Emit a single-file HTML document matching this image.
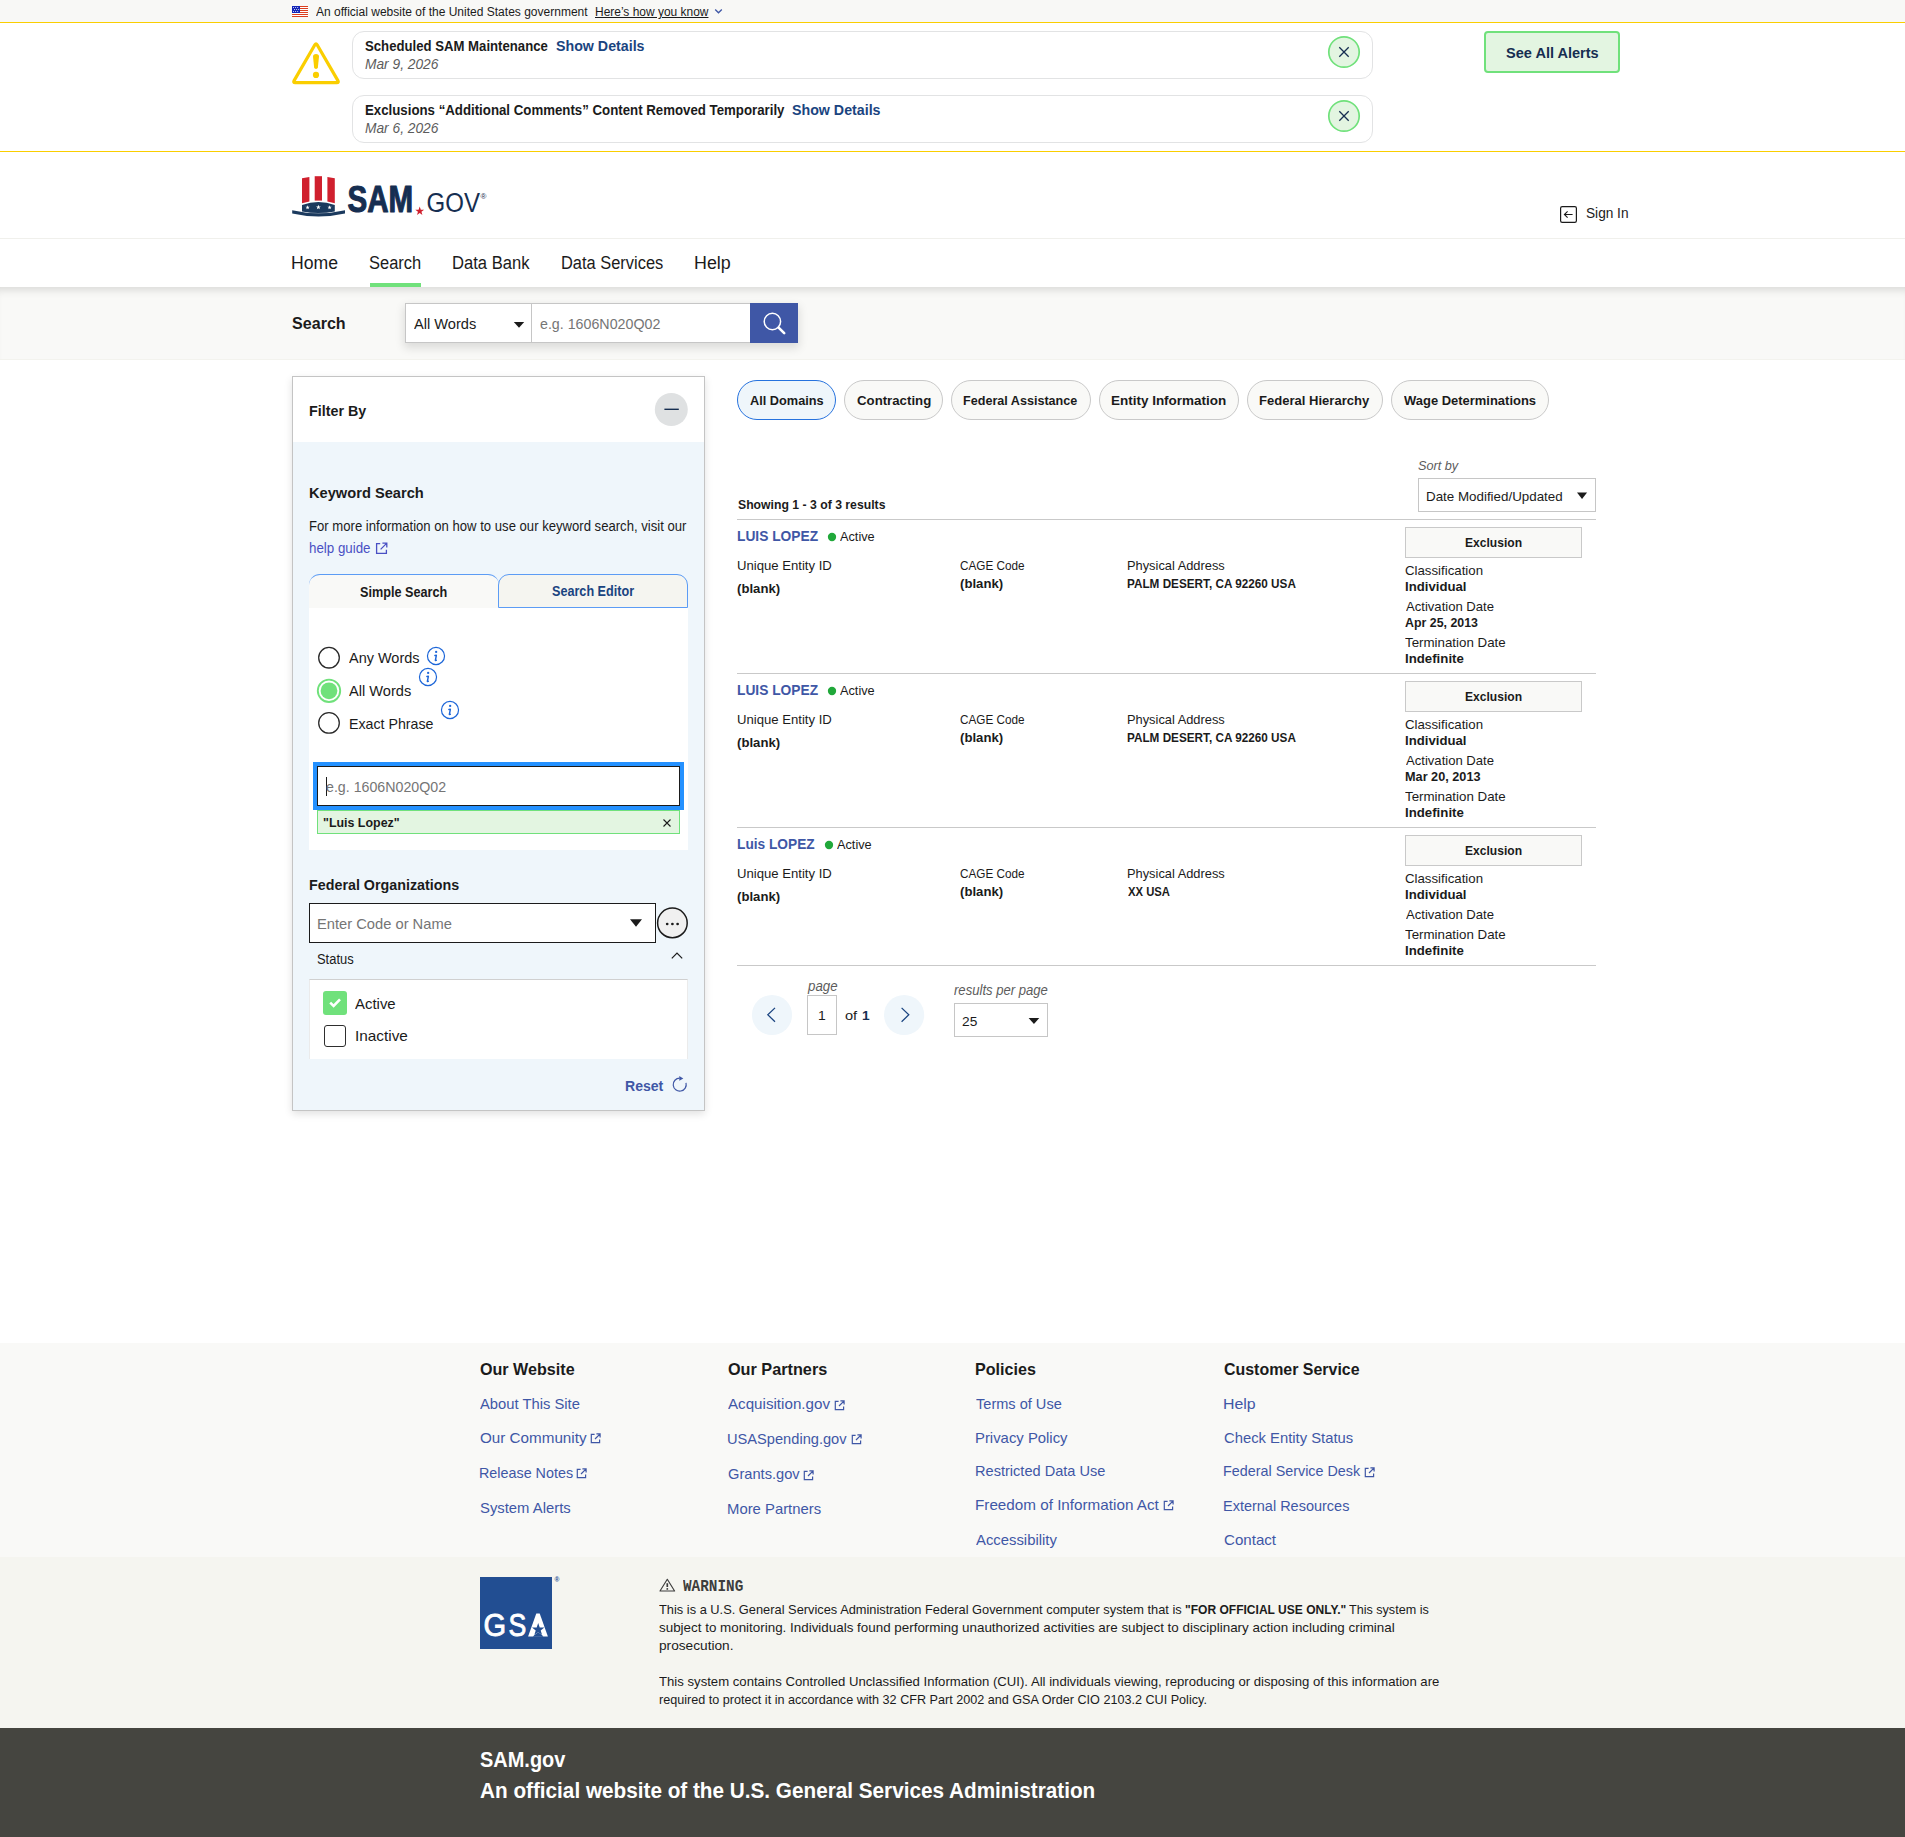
<!DOCTYPE html>
<html lang="en"><head><meta charset="utf-8"><title>SAM.gov | Search</title>
<style>
html,body{margin:0;padding:0;}
body{width:1905px;height:1837px;position:relative;overflow:hidden;background:#fff;font-family:"Liberation Sans",sans-serif;color:#1b1b1b;}
body>div,body>svg,body>span{position:absolute;box-sizing:border-box;}
.t{white-space:nowrap;}
svg{display:block;overflow:visible;}
</style></head>
<body>
<div style="left:0px;top:0px;width:1905px;height:22px;background:#f8f8f6;"></div>
<div style="left:0px;top:22px;width:1905px;height:1px;background:#face00;"></div>
<svg style="left:292px;top:6px" width="16" height="11" viewBox="0 0 16 11"><rect width="16" height="11" fill="#fff"/><g fill="#db3e1f"><rect y="0" width="16" height="1"/><rect y="2" width="16" height="1"/><rect y="4" width="16" height="1"/><rect y="6" width="16" height="1"/><rect y="8" width="16" height="1"/><rect y="10" width="16" height="1"/></g><rect width="8" height="7" fill="#1426b8"/><g fill="#fff"><circle cx="1.5" cy="1.6" r="0.5"/><circle cx="3.6" cy="1.6" r="0.5"/><circle cx="5.7" cy="1.6" r="0.5"/><circle cx="2.5" cy="3.5" r="0.5"/><circle cx="4.6" cy="3.5" r="0.5"/><circle cx="6.7" cy="3.5" r="0.5"/><circle cx="1.5" cy="5.5" r="0.5"/><circle cx="3.6" cy="5.5" r="0.5"/><circle cx="5.7" cy="5.5" r="0.5"/></g></svg>
<span class="t" style="top:5.00px;font-size:12.0px;line-height:14px;left:315.98px;transform:scaleX(1.0013);transform-origin:0 0;">An official website of the United States government</span>
<span class="t" style="top:5.00px;font-size:12.0px;line-height:14px;left:594.52px;text-decoration:underline;transform:scaleX(0.9966);transform-origin:0 0;">Here’s how you know</span>
<svg style="left:714px;top:8px" width="9" height="7" viewBox="0 0 9 7"><path d="M1.2 1.5 L4.5 4.8 L7.8 1.5" fill="none" stroke="#3f57a6" stroke-width="1.3"/></svg>
<div style="left:0px;top:151px;width:1905px;height:1px;background:#face00;"></div>
<svg style="left:285px;top:30px" width="80" height="65" viewBox="285 30 80 65"><path d="M314.9 44.7 Q316 42.8 317.1 44.7 L337.9 80.6 Q339 82.65 336.8 82.65 L295.2 82.65 Q293 82.65 294.1 80.6 Z" fill="none" stroke="#face00" stroke-width="3.2" stroke-linejoin="round"/><path d="M313 56.6 Q313 53.9 316 53.9 Q319 53.9 319 56.6 L317.9 67.3 Q317.7 69.1 316 69.1 Q314.3 69.1 314.1 67.3 Z" fill="#face00"/><circle cx="316" cy="74.9" r="3.1" fill="#face00"/></svg>
<div style="left:352px;top:31px;width:1021px;height:48px;border:1px solid #e2e3e4;border-radius:12px;background:#fff;"></div>
<span class="t" style="top:37.00px;font-size:15.0px;line-height:17px;left:365.12px;font-weight:700;transform:scaleX(0.8774);transform-origin:0 0;">Scheduled SAM Maintenance</span>
<span class="t" style="top:37.00px;font-size:15.0px;line-height:17px;left:556.09px;font-weight:700;color:#1a4480;transform:scaleX(0.9479);transform-origin:0 0;">Show Details</span>
<span class="t" style="top:55.00px;font-size:15.0px;line-height:17px;left:365.08px;font-style:italic;color:#5c5c5c;transform:scaleX(0.9173);transform-origin:0 0;">Mar 9, 2026</span>
<svg style="left:1327px;top:35px" width="34" height="34" viewBox="0 0 34 34"><circle cx="17" cy="17" r="15.2" fill="#e3f5e1" stroke="#70e17b" stroke-width="1.7"/><path d="M12.3 12.3 L21.7 21.7 M21.7 12.3 L12.3 21.7" stroke="#162e51" stroke-width="1.3" fill="none"/></svg>
<div style="left:352px;top:95px;width:1021px;height:48px;border:1px solid #e2e3e4;border-radius:12px;background:#fff;"></div>
<span class="t" style="top:101.00px;font-size:15.0px;line-height:17px;left:364.61px;font-weight:700;transform:scaleX(0.8834);transform-origin:0 0;">Exclusions “Additional Comments” Content Removed Temporarily</span>
<span class="t" style="top:101.00px;font-size:15.0px;line-height:17px;left:792.09px;font-weight:700;color:#1a4480;transform:scaleX(0.9479);transform-origin:0 0;">Show Details</span>
<span class="t" style="top:119.00px;font-size:15.0px;line-height:17px;left:365.08px;font-style:italic;color:#5c5c5c;transform:scaleX(0.9173);transform-origin:0 0;">Mar 6, 2026</span>
<svg style="left:1327px;top:99px" width="34" height="34" viewBox="0 0 34 34"><circle cx="17" cy="17" r="15.2" fill="#e3f5e1" stroke="#70e17b" stroke-width="1.7"/><path d="M12.3 12.3 L21.7 21.7 M21.7 12.3 L12.3 21.7" stroke="#162e51" stroke-width="1.3" fill="none"/></svg>
<div style="left:1484px;top:31px;width:136px;height:42px;border:2px solid #70e17b;border-radius:4px;background:#e3f5e1;"></div>
<span class="t" style="top:44.00px;font-size:15.0px;line-height:17px;left:1506.08px;font-weight:700;color:#162e51;transform:scaleX(0.9697);transform-origin:0 0;">See All Alerts</span>
<svg style="left:288px;top:172px" width="204" height="48" viewBox="288 172 204 48">
<g fill="#d0202e"><path d="M302 178.2 L309.4 176.9 L309.4 201.6 L302 203.2 Z"/><path d="M314.7 176.2 L322 176.2 L322 200.6 L314.7 200.6 Z"/><path d="M327.4 176.9 L334.8 178.2 L334.8 203.2 L327.4 201.6 Z"/></g>
<path d="M302 205 Q318.4 199.2 334.8 205 L334.8 211.6 Q318.4 214.6 302 211.6 Z" fill="#1b3a5e"/>
<path d="M292.2 210.2 Q318.5 216.4 345 210.2 L345 213.5 Q318.5 219.5 292.2 213.5 Z" fill="#1b3a5e"/>
<g fill="#fff"><path id="st" d="M0 -2.2 L0.55 -0.7 L2.1 -0.7 L0.85 0.3 L1.3 1.8 L0 0.9 L-1.3 1.8 L-0.85 0.3 L-2.1 -0.7 L-0.55 -0.7 Z" transform="translate(307.6 207.5)"/><path d="M0 -2.2 L0.55 -0.7 L2.1 -0.7 L0.85 0.3 L1.3 1.8 L0 0.9 L-1.3 1.8 L-0.85 0.3 L-2.1 -0.7 L-0.55 -0.7 Z" transform="translate(318.4 207.2) scale(1.15)"/><path d="M0 -2.2 L0.55 -0.7 L2.1 -0.7 L0.85 0.3 L1.3 1.8 L0 0.9 L-1.3 1.8 L-0.85 0.3 L-2.1 -0.7 L-0.55 -0.7 Z" transform="translate(329.6 207.5)"/></g>
<text x="347.6" y="212" font-family="Liberation Sans, sans-serif" font-weight="700" font-size="36.4" textLength="65.6" lengthAdjust="spacingAndGlyphs" fill="#162e51" stroke="#162e51" stroke-width="1.1" stroke-linejoin="round">SAM</text>
<path d="M0 -4.6 L1.1 -1.45 L4.4 -1.45 L1.75 0.55 L2.7 3.7 L0 1.8 L-2.7 3.7 L-1.75 0.55 L-4.4 -1.45 L-1.1 -1.45 Z" transform="translate(419.7 211.2)" fill="#d0202e"/>
<text x="426.6" y="212.4" font-family="Liberation Sans, sans-serif" font-size="28.4" textLength="53.4" lengthAdjust="spacingAndGlyphs" fill="#162e51">GOV</text>
<text x="480.6" y="199.2" font-family="Liberation Sans, sans-serif" font-size="8" fill="#162e51">®</text>
</svg>
<svg style="left:1559px;top:205px" width="19" height="19" viewBox="0 0 19 19"><rect x="1.6" y="1.6" width="15.8" height="15.8" rx="1.6" fill="none" stroke="#1b1b1b" stroke-width="1.2"/><path d="M13.6 9.5 L5.6 9.5 M8.6 6.4 L5.4 9.5 L8.6 12.6" fill="none" stroke="#1b1b1b" stroke-width="1.1"/></svg>
<span class="t" style="top:204.00px;font-size:15.0px;line-height:17px;left:1585.68px;transform:scaleX(0.9101);transform-origin:0 0;">Sign In</span>
<div style="left:0px;top:238px;width:1905px;height:1px;background:#f0f0ec;"></div>
<span class="t" style="top:253.00px;font-size:17.81px;line-height:20px;left:291.15px;transform:scaleX(0.9904);transform-origin:0 0;">Home</span>
<span class="t" style="top:253.00px;font-size:17.81px;line-height:20px;left:369.45px;transform:scaleX(0.9260);transform-origin:0 0;">Search</span>
<span class="t" style="top:253.00px;font-size:17.81px;line-height:20px;left:452.44px;transform:scaleX(0.9330);transform-origin:0 0;">Data Bank</span>
<span class="t" style="top:253.00px;font-size:17.81px;line-height:20px;left:561.35px;transform:scaleX(0.9229);transform-origin:0 0;">Data Services</span>
<span class="t" style="top:253.00px;font-size:17.81px;line-height:20px;left:694.23px;transform:scaleX(1.0029);transform-origin:0 0;">Help</span>
<div style="left:370px;top:283px;width:51px;height:4px;background:#70e17b;"></div>
<div style="left:0px;top:287px;width:1905px;height:73px;background:#f9f9f7;box-shadow:inset 0 9px 8px -6px rgba(0,0,0,0.13);"></div>
<div style="left:0px;top:359px;width:1905px;height:1px;background:#f3f3ee;"></div>
<span class="t" style="top:314.00px;font-size:16.88px;line-height:19px;left:292.14px;font-weight:700;transform:scaleX(0.9543);transform-origin:0 0;">Search</span>
<div style="left:405px;top:303px;width:393px;height:40px;box-shadow:0 4px 9px 1px rgba(0,0,0,0.12);background:#fff;"></div>
<div style="left:405px;top:303px;width:127px;height:40px;border:1px solid #c6c6c6;background:#fff;"></div>
<div style="left:531px;top:303px;width:220px;height:40px;border:1px solid #c6c6c6;background:#fff;"></div>
<span class="t" style="top:315.00px;font-size:15.0px;line-height:17px;left:414.27px;transform:scaleX(0.9742);transform-origin:0 0;">All Words</span>
<svg style="left:513px;top:321px" width="12" height="8" viewBox="0 0 12 8"><path d="M0.8 1 L11.2 1 L6 6.8 Z" fill="#1b1b1b"/></svg>
<span class="t" style="top:315.00px;font-size:15.0px;line-height:17px;left:539.70px;color:#757575;transform:scaleX(0.9490);transform-origin:0 0;">e.g. 1606N020Q02</span>
<div style="left:750px;top:303px;width:48px;height:40px;background:#3f57a6;"></div>
<svg style="left:750px;top:303px" width="48" height="40" viewBox="750 303 48 40"><circle cx="772.4" cy="321.5" r="8.2" fill="none" stroke="#fff" stroke-width="1.5"/><path d="M778.6 327.6 L784.2 333.2" stroke="#fff" stroke-width="2.6" stroke-linecap="round"/></svg>
<div style="left:292px;top:376px;width:413px;height:735px;border:1px solid #c4c4c4;background:#eff6fb;box-shadow:0 3px 8px rgba(0,0,0,0.12);"></div>
<div style="left:293px;top:377px;width:411px;height:65px;background:#fff;"></div>
<span class="t" style="top:402.00px;font-size:15.47px;line-height:17px;left:308.94px;font-weight:700;transform:scaleX(0.9248);transform-origin:0 0;">Filter By</span>
<svg style="left:654px;top:392px" width="34" height="34" viewBox="0 0 34 34"><circle cx="17.3" cy="17.5" r="16.5" fill="#dfe1e2"/><path d="M10.4 17.3 L24.8 17.3" stroke="#162e51" stroke-width="1.4"/></svg>
<span class="t" style="top:484.00px;font-size:15.0px;line-height:17px;left:308.82px;font-weight:700;transform:scaleX(0.9765);transform-origin:0 0;">Keyword Search</span>
<span class="t" style="top:518.00px;font-size:13.97px;line-height:16px;left:308.72px;transform:scaleX(0.9384);transform-origin:0 0;">For more information on how to use our keyword search, visit our</span>
<span class="t" style="top:540.00px;font-size:13.97px;line-height:16px;left:308.88px;color:#4a50c4;transform:scaleX(0.9540);transform-origin:0 0;">help guide</span>
<svg style="left:375px;top:542px" width="13" height="13" viewBox="0 0 13 13"><path d="M5.2 1.6 L1.6 1.6 L1.6 11.4 L11.4 11.4 L11.4 7.8 M7.4 1.2 L11.8 1.2 L11.8 5.6 M11.6 1.4 L5.6 7.4" fill="none" stroke="#4a50c4" stroke-width="1.3"/></svg>
<div style="left:309px;top:607px;width:379px;height:243px;background:#fff;"></div>
<div style="left:309px;top:574px;width:190px;height:34px;background:#f9f9f7;border-top:1px solid #5c9cf5;border-radius:11px 11px 0 0;"></div>
<div style="left:498px;top:574px;width:190px;height:34px;background:#f5f5f0;border:1px solid #5c9cf5;border-radius:11px 11px 0 0;"></div>
<span class="t" style="top:584.00px;font-size:13.97px;line-height:16px;left:359.94px;font-weight:700;transform:scaleX(0.9062);transform-origin:0 0;">Simple Search</span>
<span class="t" style="top:583.00px;font-size:13.97px;line-height:16px;left:552.04px;font-weight:700;color:#1a4480;transform:scaleX(0.9034);transform-origin:0 0;">Search Editor</span>
<svg style="left:317px;top:646px" width="24" height="24" viewBox="0 0 24 24"><circle cx="12" cy="11.7" r="10.3" fill="#fff" stroke="#2a2a2a" stroke-width="1.3"/></svg>
<span class="t" style="top:649.00px;font-size:15.0px;line-height:17px;left:349.27px;transform:scaleX(0.9652);transform-origin:0 0;">Any Words</span>
<svg style="left:426.3px;top:646.2px" width="20" height="20" viewBox="0 0 20 20"><circle cx="10" cy="10" r="8.55" fill="none" stroke="#1d66d8" stroke-width="1.2"/><circle cx="10.15" cy="5.95" r="1.15" fill="#1d66d8"/><path d="M8.9 9.5 L10.35 9.3 L9.35 14.5 L10.3 14.3" fill="none" stroke="#1d66d8" stroke-width="1.45" stroke-linecap="round" stroke-linejoin="round"/></svg>
<svg style="left:316px;top:678px" width="26" height="26" viewBox="0 0 26 26"><circle cx="13" cy="12.8" r="11.2" fill="#fff" stroke="#70e17b" stroke-width="1.9"/><circle cx="13" cy="12.8" r="8.4" fill="#70e17b"/></svg>
<span class="t" style="top:682.00px;font-size:15.0px;line-height:17px;left:349.27px;transform:scaleX(0.9742);transform-origin:0 0;">All Words</span>
<svg style="left:418px;top:667.4px" width="20" height="20" viewBox="0 0 20 20"><circle cx="10" cy="10" r="8.55" fill="none" stroke="#1d66d8" stroke-width="1.2"/><circle cx="10.15" cy="5.95" r="1.15" fill="#1d66d8"/><path d="M8.9 9.5 L10.35 9.3 L9.35 14.5 L10.3 14.3" fill="none" stroke="#1d66d8" stroke-width="1.45" stroke-linecap="round" stroke-linejoin="round"/></svg>
<svg style="left:317px;top:711px" width="24" height="24" viewBox="0 0 24 24"><circle cx="12" cy="11.9" r="10.3" fill="#fff" stroke="#2a2a2a" stroke-width="1.3"/></svg>
<span class="t" style="top:715.00px;font-size:15.0px;line-height:17px;left:349.13px;transform:scaleX(0.9471);transform-origin:0 0;">Exact Phrase</span>
<svg style="left:440px;top:700.2px" width="20" height="20" viewBox="0 0 20 20"><circle cx="10" cy="10" r="8.55" fill="none" stroke="#1d66d8" stroke-width="1.2"/><circle cx="10.15" cy="5.95" r="1.15" fill="#1d66d8"/><path d="M8.9 9.5 L10.35 9.3 L9.35 14.5 L10.3 14.3" fill="none" stroke="#1d66d8" stroke-width="1.45" stroke-linecap="round" stroke-linejoin="round"/></svg>
<div style="left:313px;top:762px;width:371px;height:48px;background:#2491ff;"></div>
<div style="left:317px;top:766px;width:363px;height:40px;background:#fff;border:1px solid #1b1b1b;"></div>
<div style="left:326px;top:777px;width:1px;height:19px;background:#1b1b1b;"></div>
<span class="t" style="top:778.00px;font-size:15.0px;line-height:17px;left:325.80px;color:#757575;transform:scaleX(0.9474);transform-origin:0 0;">e.g. 1606N020Q02</span>
<div style="left:317px;top:810px;width:363px;height:24px;background:#e3f5e1;border:1px solid #70e17b;"></div>
<span class="t" style="top:815.00px;font-size:13.12px;line-height:15px;left:322.58px;font-weight:700;transform:scaleX(0.9474);transform-origin:0 0;">&quot;Luis Lopez&quot;</span>
<svg style="left:662px;top:818px" width="10" height="10" viewBox="0 0 10 10"><path d="M1.5 1.5 L8.5 8.5 M8.5 1.5 L1.5 8.5" stroke="#1b1b1b" stroke-width="1.1"/></svg>
<span class="t" style="top:876.00px;font-size:15.0px;line-height:17px;left:308.84px;font-weight:700;transform:scaleX(0.9536);transform-origin:0 0;">Federal Organizations</span>
<div style="left:309px;top:903px;width:347px;height:40px;background:#fff;border:1px solid #1b1b1b;"></div>
<span class="t" style="top:915.00px;font-size:15.0px;line-height:17px;left:317.39px;color:#757575;transform:scaleX(0.9802);transform-origin:0 0;">Enter Code or Name</span>
<svg style="left:629px;top:918px" width="14" height="10" viewBox="0 0 14 10"><path d="M1 1.3 L13 1.3 L7 8.8 Z" fill="#1b1b1b"/></svg>
<svg style="left:656px;top:906px" width="34" height="34" viewBox="0 0 34 34"><circle cx="16.4" cy="16.9" r="14.8" fill="#f0f0f0" stroke="#1b1b1b" stroke-width="1.5"/><circle cx="11.2" cy="18" r="1.35" fill="#1b1b1b"/><circle cx="16.4" cy="18" r="1.35" fill="#1b1b1b"/><circle cx="21.6" cy="18" r="1.35" fill="#1b1b1b"/></svg>
<span class="t" style="top:951.00px;font-size:13.97px;line-height:16px;left:317.01px;transform:scaleX(0.9254);transform-origin:0 0;">Status</span>
<svg style="left:670px;top:950px" width="14" height="10" viewBox="0 0 14 10"><path d="M1.8 8.4 L7 3 L12.2 8.4" fill="none" stroke="#1b1b1b" stroke-width="1.2"/></svg>
<div style="left:309px;top:979px;width:379px;height:80px;background:#fff;border:1px solid #ebebeb;border-top-color:#d0d0d0;border-bottom:none;"></div>
<svg style="left:323px;top:991px" width="24" height="24" viewBox="0 0 24 24"><rect width="24" height="24" rx="3" fill="#70e17b"/><path d="M7.2 11.6 L10.6 14.9 L17 8.3" fill="none" stroke="#fff" stroke-width="2.6"/></svg>
<span class="t" style="top:995.00px;font-size:15.0px;line-height:17px;left:355.07px;transform:scaleX(0.9959);transform-origin:0 0;">Active</span>
<div style="left:324px;top:1025px;width:22px;height:22px;background:#fff;border:1.5px solid #2e2e2e;border-radius:3px;"></div>
<span class="t" style="top:1027.00px;font-size:15.0px;line-height:17px;left:354.58px;transform:scaleX(1.0231);transform-origin:0 0;">Inactive</span>
<span class="t" style="top:1078.00px;font-size:14.44px;line-height:16px;left:624.56px;font-weight:700;color:#3f57a6;transform:scaleX(0.9742);transform-origin:0 0;">Reset</span>
<svg style="left:671px;top:1075px" width="18" height="18" viewBox="0 0 18 18"><path d="M8.7 3.1 A6.5 6.5 0 1 0 15 7.9" fill="none" stroke="#3f57a6" stroke-width="1.2"/><path d="M8.3 0.9 L12.3 3.4 L8.3 5.7 Z" fill="#3f57a6"/></svg>
<div style="left:737px;top:380px;width:99px;height:40px;border:1px solid #2672de;border-radius:20px;background:#eff6fb;"></div>
<span class="t" style="top:393.00px;font-size:13.69px;line-height:15px;left:749.88px;font-weight:700;transform:scaleX(0.9309);transform-origin:0 0;">All Domains</span>
<div style="left:844px;top:380px;width:99px;height:40px;border:1px solid #c9c9c9;border-radius:20px;background:#f9f9f7;"></div>
<span class="t" style="top:393.00px;font-size:13.69px;line-height:15px;left:856.66px;font-weight:700;transform:scaleX(0.9663);transform-origin:0 0;">Contracting</span>
<div style="left:951px;top:380px;width:140px;height:40px;border:1px solid #c9c9c9;border-radius:20px;background:#f9f9f7;"></div>
<span class="t" style="top:393.00px;font-size:13.69px;line-height:15px;left:963.46px;font-weight:700;transform:scaleX(0.9196);transform-origin:0 0;">Federal Assistance</span>
<div style="left:1099px;top:380px;width:140px;height:40px;border:1px solid #c9c9c9;border-radius:20px;background:#f9f9f7;"></div>
<span class="t" style="top:393.00px;font-size:13.69px;line-height:15px;left:1111.30px;font-weight:700;transform:scaleX(0.9840);transform-origin:0 0;">Entity Information</span>
<div style="left:1247px;top:380px;width:136px;height:40px;border:1px solid #c9c9c9;border-radius:20px;background:#f9f9f7;"></div>
<span class="t" style="top:393.00px;font-size:13.69px;line-height:15px;left:1259.43px;font-weight:700;transform:scaleX(0.9532);transform-origin:0 0;">Federal Hierarchy</span>
<div style="left:1391px;top:380px;width:158px;height:40px;border:1px solid #c9c9c9;border-radius:20px;background:#f9f9f7;"></div>
<span class="t" style="top:393.00px;font-size:13.69px;line-height:15px;left:1403.99px;font-weight:700;transform:scaleX(0.9470);transform-origin:0 0;">Wage Determinations</span>
<span class="t" style="top:458.00px;font-size:12.75px;line-height:15px;left:1418.14px;font-style:italic;color:#5c5c5c;transform:scaleX(0.9954);transform-origin:0 0;">Sort by</span>
<div style="left:1418px;top:478px;width:178px;height:34px;border:1px solid #c6c6c6;background:#fff;"></div>
<span class="t" style="top:489.00px;font-size:12.75px;line-height:15px;left:1426.40px;transform:scaleX(1.0478);transform-origin:0 0;">Date Modified/Updated</span>
<svg style="left:1576px;top:491px" width="12" height="9" viewBox="0 0 12 9"><path d="M1 1.4 L11.1 1.4 L6.05 7.9 Z" fill="#1b1b1b"/></svg>
<span class="t" style="top:497.00px;font-size:12.75px;line-height:15px;left:737.75px;font-weight:700;transform:scaleX(0.9590);transform-origin:0 0;">Showing 1 - 3 of 3 results</span>
<div style="left:737px;top:519px;width:859px;height:1px;background:#c9c9c9;"></div>
<div style="left:737px;top:673px;width:859px;height:1px;background:#c9c9c9;"></div>
<div style="left:737px;top:827px;width:859px;height:1px;background:#c9c9c9;"></div>
<div style="left:737px;top:965px;width:859px;height:1px;background:#c9c9c9;"></div>
<span class="t" style="top:528.00px;font-size:13.97px;line-height:16px;left:737.18px;font-weight:700;color:#3f57a6;transform:scaleX(0.9861);transform-origin:0 0;">LUIS LOPEZ</span>
<svg style="left:827.0px;top:531.8px" width="10" height="10" viewBox="0 0 10 10"><circle cx="5" cy="5" r="4.15" fill="#20a83a"/></svg>
<span class="t" style="top:529.00px;font-size:12.75px;line-height:15px;left:840.38px;transform:scaleX(0.9987);transform-origin:0 0;">Active</span>
<span class="t" style="top:558.00px;font-size:12.75px;line-height:15px;left:737.09px;transform:scaleX(1.0293);transform-origin:0 0;">Unique Entity ID</span>
<span class="t" style="top:581.00px;font-size:12.75px;line-height:15px;left:737.45px;font-weight:700;transform:scaleX(1.0314);transform-origin:0 0;">(blank)</span>
<span class="t" style="top:558.00px;font-size:12.75px;line-height:15px;left:959.90px;transform:scaleX(0.9211);transform-origin:0 0;">CAGE Code</span>
<span class="t" style="top:576.00px;font-size:12.75px;line-height:15px;left:959.85px;font-weight:700;transform:scaleX(1.0314);transform-origin:0 0;">(blank)</span>
<span class="t" style="top:558.00px;font-size:12.75px;line-height:15px;left:1126.55px;transform:scaleX(1.0064);transform-origin:0 0;">Physical Address</span>
<span class="t" style="top:576.00px;font-size:12.75px;line-height:15px;left:1126.82px;font-weight:700;transform:scaleX(0.9203);transform-origin:0 0;">PALM DESERT, CA 92260 USA</span>
<div style="left:1405px;top:527px;width:177px;height:31px;border:1px solid #c9c9c9;background:#f9f9f7;"></div>
<span class="t" style="top:535.00px;font-size:12.75px;line-height:15px;left:1464.99px;font-weight:700;transform:scaleX(0.9472);transform-origin:0 0;">Exclusion</span>
<span class="t" style="top:563.00px;font-size:12.75px;line-height:15px;left:1405.03px;transform:scaleX(1.0387);transform-origin:0 0;">Classification</span>
<span class="t" style="top:579.00px;font-size:12.75px;line-height:15px;left:1404.82px;font-weight:700;transform:scaleX(1.0336);transform-origin:0 0;">Individual</span>
<span class="t" style="top:599.00px;font-size:12.75px;line-height:15px;left:1405.67px;transform:scaleX(1.0261);transform-origin:0 0;">Activation Date</span>
<span class="t" style="top:615.00px;font-size:12.75px;line-height:15px;left:1405.39px;font-weight:700;transform:scaleX(0.9709);transform-origin:0 0;">Apr 25, 2013</span>
<span class="t" style="top:635.00px;font-size:12.75px;line-height:15px;left:1405.40px;transform:scaleX(1.0446);transform-origin:0 0;">Termination Date</span>
<span class="t" style="top:651.00px;font-size:12.75px;line-height:15px;left:1404.81px;font-weight:700;transform:scaleX(1.0382);transform-origin:0 0;">Indefinite</span>
<span class="t" style="top:682.00px;font-size:13.97px;line-height:16px;left:737.18px;font-weight:700;color:#3f57a6;transform:scaleX(0.9861);transform-origin:0 0;">LUIS LOPEZ</span>
<svg style="left:827.0px;top:685.8px" width="10" height="10" viewBox="0 0 10 10"><circle cx="5" cy="5" r="4.15" fill="#20a83a"/></svg>
<span class="t" style="top:683.00px;font-size:12.75px;line-height:15px;left:840.38px;transform:scaleX(0.9987);transform-origin:0 0;">Active</span>
<span class="t" style="top:712.00px;font-size:12.75px;line-height:15px;left:737.09px;transform:scaleX(1.0293);transform-origin:0 0;">Unique Entity ID</span>
<span class="t" style="top:735.00px;font-size:12.75px;line-height:15px;left:737.45px;font-weight:700;transform:scaleX(1.0314);transform-origin:0 0;">(blank)</span>
<span class="t" style="top:712.00px;font-size:12.75px;line-height:15px;left:959.90px;transform:scaleX(0.9211);transform-origin:0 0;">CAGE Code</span>
<span class="t" style="top:730.00px;font-size:12.75px;line-height:15px;left:959.85px;font-weight:700;transform:scaleX(1.0314);transform-origin:0 0;">(blank)</span>
<span class="t" style="top:712.00px;font-size:12.75px;line-height:15px;left:1126.55px;transform:scaleX(1.0064);transform-origin:0 0;">Physical Address</span>
<span class="t" style="top:730.00px;font-size:12.75px;line-height:15px;left:1126.82px;font-weight:700;transform:scaleX(0.9203);transform-origin:0 0;">PALM DESERT, CA 92260 USA</span>
<div style="left:1405px;top:681px;width:177px;height:31px;border:1px solid #c9c9c9;background:#f9f9f7;"></div>
<span class="t" style="top:689.00px;font-size:12.75px;line-height:15px;left:1464.99px;font-weight:700;transform:scaleX(0.9472);transform-origin:0 0;">Exclusion</span>
<span class="t" style="top:717.00px;font-size:12.75px;line-height:15px;left:1405.03px;transform:scaleX(1.0387);transform-origin:0 0;">Classification</span>
<span class="t" style="top:733.00px;font-size:12.75px;line-height:15px;left:1404.82px;font-weight:700;transform:scaleX(1.0336);transform-origin:0 0;">Individual</span>
<span class="t" style="top:753.00px;font-size:12.75px;line-height:15px;left:1405.67px;transform:scaleX(1.0261);transform-origin:0 0;">Activation Date</span>
<span class="t" style="top:769.00px;font-size:12.75px;line-height:15px;left:1404.85px;font-weight:700;transform:scaleX(0.9954);transform-origin:0 0;">Mar 20, 2013</span>
<span class="t" style="top:789.00px;font-size:12.75px;line-height:15px;left:1405.40px;transform:scaleX(1.0446);transform-origin:0 0;">Termination Date</span>
<span class="t" style="top:805.00px;font-size:12.75px;line-height:15px;left:1404.81px;font-weight:700;transform:scaleX(1.0382);transform-origin:0 0;">Indefinite</span>
<span class="t" style="top:836.00px;font-size:13.97px;line-height:16px;left:737.18px;font-weight:700;color:#3f57a6;transform:scaleX(0.9816);transform-origin:0 0;">Luis LOPEZ</span>
<svg style="left:823.6px;top:839.8px" width="10" height="10" viewBox="0 0 10 10"><circle cx="5" cy="5" r="4.15" fill="#20a83a"/></svg>
<span class="t" style="top:837.00px;font-size:12.75px;line-height:15px;left:836.98px;transform:scaleX(0.9987);transform-origin:0 0;">Active</span>
<span class="t" style="top:866.00px;font-size:12.75px;line-height:15px;left:737.09px;transform:scaleX(1.0293);transform-origin:0 0;">Unique Entity ID</span>
<span class="t" style="top:889.00px;font-size:12.75px;line-height:15px;left:737.45px;font-weight:700;transform:scaleX(1.0314);transform-origin:0 0;">(blank)</span>
<span class="t" style="top:866.00px;font-size:12.75px;line-height:15px;left:959.90px;transform:scaleX(0.9211);transform-origin:0 0;">CAGE Code</span>
<span class="t" style="top:884.00px;font-size:12.75px;line-height:15px;left:959.85px;font-weight:700;transform:scaleX(1.0314);transform-origin:0 0;">(blank)</span>
<span class="t" style="top:866.00px;font-size:12.75px;line-height:15px;left:1126.55px;transform:scaleX(1.0064);transform-origin:0 0;">Physical Address</span>
<span class="t" style="top:884.00px;font-size:12.75px;line-height:15px;left:1127.50px;font-weight:700;transform:scaleX(0.8844);transform-origin:0 0;">XX USA</span>
<div style="left:1405px;top:835px;width:177px;height:31px;border:1px solid #c9c9c9;background:#f9f9f7;"></div>
<span class="t" style="top:843.00px;font-size:12.75px;line-height:15px;left:1464.99px;font-weight:700;transform:scaleX(0.9472);transform-origin:0 0;">Exclusion</span>
<span class="t" style="top:871.00px;font-size:12.75px;line-height:15px;left:1405.03px;transform:scaleX(1.0387);transform-origin:0 0;">Classification</span>
<span class="t" style="top:887.00px;font-size:12.75px;line-height:15px;left:1404.82px;font-weight:700;transform:scaleX(1.0336);transform-origin:0 0;">Individual</span>
<span class="t" style="top:907.00px;font-size:12.75px;line-height:15px;left:1405.67px;transform:scaleX(1.0261);transform-origin:0 0;">Activation Date</span>
<span class="t" style="top:927.00px;font-size:12.75px;line-height:15px;left:1405.40px;transform:scaleX(1.0446);transform-origin:0 0;">Termination Date</span>
<span class="t" style="top:943.00px;font-size:12.75px;line-height:15px;left:1404.81px;font-weight:700;transform:scaleX(1.0382);transform-origin:0 0;">Indefinite</span>
<svg style="left:752px;top:995px" width="40" height="40" viewBox="0 0 40 40"><circle cx="20" cy="20" r="20.1" fill="#eff6fb"/><path d="M23 12.9 L15.8 19.8 L23 26.7" fill="none" stroke="#1a4480" stroke-width="1.25"/></svg>
<svg style="left:884px;top:995px" width="40" height="40" viewBox="0 0 40 40"><circle cx="20.1" cy="20" r="20.1" fill="#eff6fb"/><path d="M17.6 12.9 L24.8 19.8 L17.6 26.7" fill="none" stroke="#1a4480" stroke-width="1.25"/></svg>
<span class="t" style="top:977.00px;font-size:15.0px;line-height:17px;left:807.53px;font-style:italic;color:#5c5c5c;transform:scaleX(0.8858);transform-origin:0 0;">page</span>
<div style="left:807px;top:995px;width:30px;height:40px;border:1px solid #c6c6c6;background:#fff;"></div>
<span class="t" style="top:1008.00px;font-size:12.75px;line-height:15px;left:818.14px;transform:scaleX(1.0909);transform-origin:0 0;">1</span>
<span class="t" style="top:1008.00px;font-size:12.75px;line-height:15px;left:844.89px;transform:scaleX(1.1458);transform-origin:0 0;">of</span>
<span class="t" style="top:1008.00px;font-size:12.75px;line-height:15px;left:861.63px;font-weight:700;color:#162e51;transform:scaleX(1.0782);transform-origin:0 0;">1</span>
<span class="t" style="top:981.00px;font-size:15.0px;line-height:17px;left:953.98px;font-style:italic;color:#5c5c5c;transform:scaleX(0.8729);transform-origin:0 0;">results per page</span>
<div style="left:954px;top:1003px;width:94px;height:34px;border:1px solid #c6c6c6;background:#fff;"></div>
<span class="t" style="top:1014.00px;font-size:12.75px;line-height:15px;left:962.41px;transform:scaleX(1.0760);transform-origin:0 0;">25</span>
<svg style="left:1028px;top:1016px" width="12" height="9" viewBox="0 0 12 9"><path d="M0.6 1.9 L11.3 1.9 L5.95 7.9 Z" fill="#1b1b1b"/></svg>
<div style="left:0px;top:1343px;width:1905px;height:214px;background:#f9f9f7;"></div>
<div style="left:0px;top:1557px;width:1905px;height:171px;background:#f5f5f0;"></div>
<div style="left:0px;top:1728px;width:1905px;height:109px;background:#454540;"></div>
<span class="t" style="top:1360.00px;font-size:16.88px;line-height:19px;left:479.84px;font-weight:700;transform:scaleX(0.9557);transform-origin:0 0;">Our Website</span>
<span class="t" style="top:1360.00px;font-size:16.88px;line-height:19px;left:727.83px;font-weight:700;transform:scaleX(0.9627);transform-origin:0 0;">Our Partners</span>
<span class="t" style="top:1360.00px;font-size:16.88px;line-height:19px;left:975.42px;font-weight:700;transform:scaleX(0.9546);transform-origin:0 0;">Policies</span>
<span class="t" style="top:1360.00px;font-size:16.88px;line-height:19px;left:1223.85px;font-weight:700;transform:scaleX(0.9458);transform-origin:0 0;">Customer Service</span>
<span class="t" style="top:1395.00px;font-size:15.0px;line-height:17px;left:480.47px;color:#3f57a6;transform:scaleX(0.9845);transform-origin:0 0;">About This Site</span>
<span class="t" style="top:1429.00px;font-size:15.0px;line-height:17px;left:479.78px;color:#3f57a6;transform:scaleX(1.0145);transform-origin:0 0;">Our Community</span>
<svg style="left:590.3px;top:1433.0px" width="11" height="11" viewBox="0 0 11 11"><path d="M4.6 1.4 L1.3 1.4 L1.3 9.7 L9.6 9.7 L9.6 6.4 M6.4 0.9 L10.1 0.9 L10.1 4.6 M9.9 1.1 L5 6" fill="none" stroke="#3f57a6" stroke-width="1.2"/></svg>
<span class="t" style="top:1464.00px;font-size:15.0px;line-height:17px;left:479.32px;color:#3f57a6;transform:scaleX(0.9563);transform-origin:0 0;">Release Notes</span>
<svg style="left:576.4px;top:1467.9px" width="11" height="11" viewBox="0 0 11 11"><path d="M4.6 1.4 L1.3 1.4 L1.3 9.7 L9.6 9.7 L9.6 6.4 M6.4 0.9 L10.1 0.9 L10.1 4.6 M9.9 1.1 L5 6" fill="none" stroke="#3f57a6" stroke-width="1.2"/></svg>
<span class="t" style="top:1499.00px;font-size:15.0px;line-height:17px;left:479.83px;color:#3f57a6;transform:scaleX(0.9892);transform-origin:0 0;">System Alerts</span>
<span class="t" style="top:1395.00px;font-size:15.0px;line-height:17px;left:728.47px;color:#3f57a6;transform:scaleX(1.0107);transform-origin:0 0;">Acquisition.gov</span>
<svg style="left:833.9px;top:1399.5px" width="11" height="11" viewBox="0 0 11 11"><path d="M4.6 1.4 L1.3 1.4 L1.3 9.7 L9.6 9.7 L9.6 6.4 M6.4 0.9 L10.1 0.9 L10.1 4.6 M9.9 1.1 L5 6" fill="none" stroke="#3f57a6" stroke-width="1.2"/></svg>
<span class="t" style="top:1430.00px;font-size:15.0px;line-height:17px;left:727.37px;color:#3f57a6;transform:scaleX(0.9754);transform-origin:0 0;">USASpending.gov</span>
<svg style="left:850.7px;top:1434.4px" width="11" height="11" viewBox="0 0 11 11"><path d="M4.6 1.4 L1.3 1.4 L1.3 9.7 L9.6 9.7 L9.6 6.4 M6.4 0.9 L10.1 0.9 L10.1 4.6 M9.9 1.1 L5 6" fill="none" stroke="#3f57a6" stroke-width="1.2"/></svg>
<span class="t" style="top:1465.00px;font-size:15.0px;line-height:17px;left:727.76px;color:#3f57a6;transform:scaleX(0.9770);transform-origin:0 0;">Grants.gov</span>
<svg style="left:802.9px;top:1469.5px" width="11" height="11" viewBox="0 0 11 11"><path d="M4.6 1.4 L1.3 1.4 L1.3 9.7 L9.6 9.7 L9.6 6.4 M6.4 0.9 L10.1 0.9 L10.1 4.6 M9.9 1.1 L5 6" fill="none" stroke="#3f57a6" stroke-width="1.2"/></svg>
<span class="t" style="top:1500.00px;font-size:15.0px;line-height:17px;left:727.28px;color:#3f57a6;transform:scaleX(0.9906);transform-origin:0 0;">More Partners</span>
<span class="t" style="top:1395.00px;font-size:15.0px;line-height:17px;left:976.17px;color:#3f57a6;transform:scaleX(0.9707);transform-origin:0 0;">Terms of Use</span>
<span class="t" style="top:1429.00px;font-size:15.0px;line-height:17px;left:975.28px;color:#3f57a6;transform:scaleX(0.9913);transform-origin:0 0;">Privacy Policy</span>
<span class="t" style="top:1462.00px;font-size:15.0px;line-height:17px;left:975.30px;color:#3f57a6;transform:scaleX(0.9719);transform-origin:0 0;">Restricted Data Use</span>
<span class="t" style="top:1496.00px;font-size:15.0px;line-height:17px;left:975.25px;color:#3f57a6;transform:scaleX(1.0157);transform-origin:0 0;">Freedom of Information Act</span>
<svg style="left:1162.5px;top:1499.9px" width="11" height="11" viewBox="0 0 11 11"><path d="M4.6 1.4 L1.3 1.4 L1.3 9.7 L9.6 9.7 L9.6 6.4 M6.4 0.9 L10.1 0.9 L10.1 4.6 M9.9 1.1 L5 6" fill="none" stroke="#3f57a6" stroke-width="1.2"/></svg>
<span class="t" style="top:1531.00px;font-size:15.0px;line-height:17px;left:976.47px;color:#3f57a6;transform:scaleX(0.9898);transform-origin:0 0;">Accessibility</span>
<span class="t" style="top:1395.00px;font-size:15.0px;line-height:17px;left:1223.20px;color:#3f57a6;transform:scaleX(1.0587);transform-origin:0 0;">Help</span>
<span class="t" style="top:1429.00px;font-size:15.0px;line-height:17px;left:1223.75px;color:#3f57a6;transform:scaleX(0.9869);transform-origin:0 0;">Check Entity Status</span>
<span class="t" style="top:1462.00px;font-size:15.0px;line-height:17px;left:1223.32px;color:#3f57a6;transform:scaleX(0.9565);transform-origin:0 0;">Federal Service Desk</span>
<svg style="left:1364.3px;top:1466.6px" width="11" height="11" viewBox="0 0 11 11"><path d="M4.6 1.4 L1.3 1.4 L1.3 9.7 L9.6 9.7 L9.6 6.4 M6.4 0.9 L10.1 0.9 L10.1 4.6 M9.9 1.1 L5 6" fill="none" stroke="#3f57a6" stroke-width="1.2"/></svg>
<span class="t" style="top:1497.00px;font-size:15.0px;line-height:17px;left:1223.31px;color:#3f57a6;transform:scaleX(0.9657);transform-origin:0 0;">External Resources</span>
<span class="t" style="top:1531.00px;font-size:15.0px;line-height:17px;left:1223.73px;color:#3f57a6;transform:scaleX(1.0072);transform-origin:0 0;">Contact</span>
<div style="left:480px;top:1577px;width:72px;height:72px;background:#224e92;"></div>
<svg style="left:480px;top:1577px" width="84" height="72" viewBox="480 1577 84 72">
<text x="483.6" y="1636.4" font-family="Liberation Sans, sans-serif" font-size="32" textLength="22.6" lengthAdjust="spacingAndGlyphs" fill="#fff" stroke="#fff" stroke-width="0.9">G</text>
<text x="508.4" y="1636.4" font-family="Liberation Sans, sans-serif" font-size="32" textLength="17.8" lengthAdjust="spacingAndGlyphs" fill="#fff" stroke="#fff" stroke-width="0.9">S</text>
<path d="M536.3 1613.6 L539.7 1613.6 L547.9 1636.4 L528.1 1636.4 Z" fill="#fff"/>
<path d="M538.20 1623.10 L539.73 1627.50 L544.38 1627.59 L540.67 1630.40 L542.02 1634.86 L538.20 1632.20 L534.38 1634.86 L535.73 1630.40 L532.02 1627.59 L536.67 1627.50 Z" fill="#224e92"/>
<path d="M534.4 1634.9 L538.2 1632.2 L542 1634.9 L543.4 1636.8 L532.8 1636.8 Z" fill="#224e92"/>
<text x="554.6" y="1582.4" font-family="Liberation Sans, sans-serif" font-size="6.6" font-weight="700" fill="#224e92">®</text>
</svg>
<svg style="left:659px;top:1578px" width="17" height="14" viewBox="0 0 17 14"><path d="M8.3 1.3 L15.6 13 L1 13 Z" fill="none" stroke="#3d3d3d" stroke-width="1.15" stroke-linejoin="round"/><path d="M8.3 5.2 L8.3 9" stroke="#3d3d3d" stroke-width="1.7"/><circle cx="8.3" cy="10.9" r="0.95" fill="#3d3d3d"/></svg>
<span class="t" style="top:1577.00px;font-size:16.4px;line-height:19px;left:683.40px;font-weight:700;color:#3d3d3d;font-family:'Liberation Mono',monospace;transform:scaleX(0.8758);transform-origin:0 0;">WARNING</span>
<span class="t" style="top:1602.00px;font-size:13.5px;line-height:15px;left:659.21px;transform:scaleX(0.9505);transform-origin:0 0;">This is a U.S. General Services Administration Federal Government computer system that is</span>
<span class="t" style="top:1602.00px;font-size:13.5px;line-height:15px;left:1184.51px;font-weight:700;transform:scaleX(0.8914);transform-origin:0 0;">&quot;FOR OFFICIAL USE ONLY.&quot;</span>
<span class="t" style="top:1602.00px;font-size:13.5px;line-height:15px;left:1349.32px;transform:scaleX(0.9324);transform-origin:0 0;">This system is</span>
<span class="t" style="top:1620.00px;font-size:13.5px;line-height:15px;left:659.13px;transform:scaleX(0.9923);transform-origin:0 0;">subject to monitoring. Individuals found performing unauthorized activities are subject to disciplinary action including criminal</span>
<span class="t" style="top:1638.00px;font-size:13.5px;line-height:15px;left:658.62px;transform:scaleX(1.0134);transform-origin:0 0;">prosecution.</span>
<span class="t" style="top:1674.00px;font-size:13.5px;line-height:15px;left:659.20px;transform:scaleX(0.9738);transform-origin:0 0;">This system contains Controlled Unclassified Information (CUI). All individuals viewing, reproducing or disposing of this information are</span>
<span class="t" style="top:1692.00px;font-size:13.5px;line-height:15px;left:658.66px;transform:scaleX(0.9341);transform-origin:0 0;">required to protect it in accordance with 32 CFR Part 2002 and GSA Order CIO 2103.2 CUI Policy.</span>
<span class="t" style="top:1747.00px;font-size:21.56px;line-height:25px;left:480.12px;font-weight:700;color:#fff;transform:scaleX(0.9260);transform-origin:0 0;">SAM.gov</span>
<span class="t" style="top:1778.00px;font-size:21.56px;line-height:25px;left:480.18px;font-weight:700;color:#fff;transform:scaleX(0.9616);transform-origin:0 0;">An official website of the U.S. General Services Administration</span>
</body></html>
